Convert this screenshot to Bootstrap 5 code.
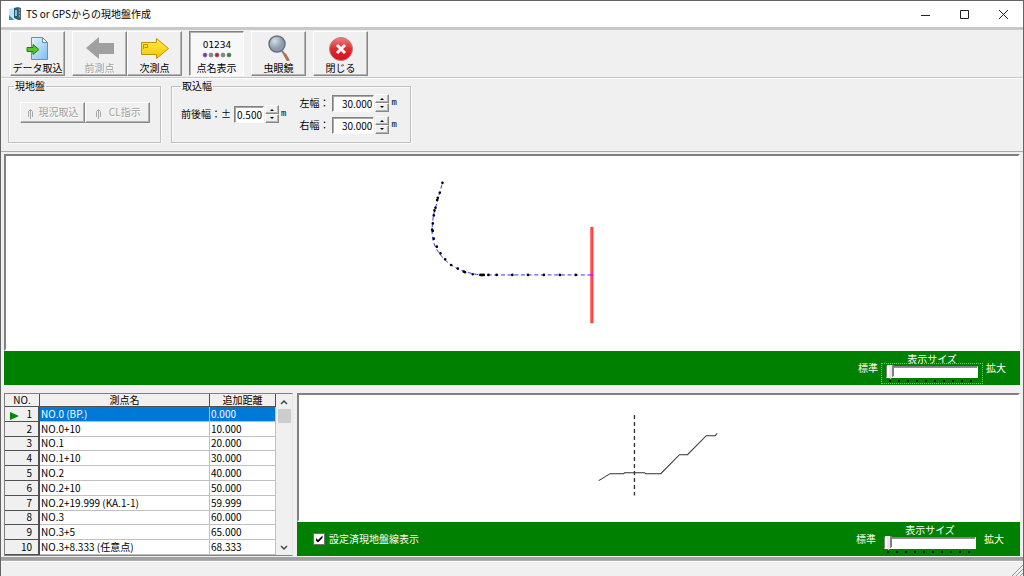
<!DOCTYPE html>
<html lang="ja">
<head>
<meta charset="utf-8">
<meta name="viewport" content="width=device-width, initial-scale=1">
<title>TS or GPSからの現地盤作成</title>
<link href="https://cdn.jsdelivr.net/npm/bootstrap@5.3.0/dist/css/bootstrap.min.css" rel="stylesheet">
<style>
  body { font: 10px/14px "Noto Sans CJK JP", sans-serif; color: #000; background: #f0f0f0; }
  .app-window { border: 1px solid #646464; border-bottom: 0; }
  .title-bar { height: 26px; background: #fff; }
  .title-bar h1 { font-size: 10px; line-height: 14px; font-weight: 400; }
  .win-btn { width: 39px; height: 25px; border: 0; background: none; padding: 0; }
  .tool-bar { padding: 1px 9px; border-top: 3px solid #c8c8c8; border-bottom: 1px solid #c8c8c8; gap: 7px; }
  .raised { background: #f0f0f0; border: 1px solid; border-color: #fff #888 #888 #fff; box-shadow: inset -1px -1px #b4b4b4; padding: 0; color: #000; white-space: nowrap; }
  .tool-btn { width: 55px; height: 45px; line-height: 14px; }
  .tool-btn svg { display: block; margin: 0 auto; }
  .tool-btn.pressed { background: #f8f8f8; border-color: #808080 #fff #fff #808080; box-shadow: inset 1px 1px #b4b4b4; }
  .raised:disabled { color: #a0a0a0; text-shadow: 1px 1px #fff; }
  .settings { padding: 0 8px 8px 7px; gap: 10px; border-top: 1px solid #fff; }
  .group-frame { border: 1px solid #c0c0c0; box-shadow: inset 1px 1px #fafafa, 1px 1px #fafafa; height: 64px; padding: 0 9px 5px; margin: 0; }
  .group-frame legend { float: none; width: auto; font-size: 10px; line-height: 14px; margin: 0 0 1px -4px; padding: 0 1px; }
  .cmd-btn { height: 21px; width: 65px; }
  .cmd-row { padding: 0 1px 0 2px; }
  .num-box { height: 17px; border: 1px solid; border-color: #808080 #fff #fff #808080; box-shadow: inset 1px 1px #a8a8a8; background: #fff; padding: 0 1px; text-align: right; line-height: 14px; border-radius: 0; margin-left: 3px; width: 42px; }
  .num-box.short { width: 30px; }
  .unit { font: 9px/14px "Liberation Mono", monospace; margin-left: 2px; }
  .side-widths { gap: 4px; margin-left: 13px; padding-right: 4px; }
  .spin { width: 14px; margin-left: 1px; }
  .spin button { height: 9px; width: 14px; display: block; }
  .spin svg { display: block; margin: 0 auto; }
  .sunken { border: 2px solid; border-color: #808080 #fff #fff #808080; background: #fff; }
  .sunken svg { flex: 1 1 0; min-height: 0; width: 100%; }
  .edge-top { border-top: 1px solid #aaa; padding: 2px 3px 0; }
  .green-bar { background: #008000; color: #fff; height: 34px; }
  .zoom-set { gap: 3px; margin-right: 14px; }
  .slider-box { width: 102px; height: 21px; padding: 1px 4px; border: 1px dotted transparent; }
  .slider-box.focused { border-color: #b0a0b0; }
  .slider-title { margin-bottom: -2px; line-height: 13px; }
  .track { appearance: none; -webkit-appearance: none; display: block; width: 100%; height: 18px; margin: 0; background: repeating-linear-gradient(90deg, #000 0 2px, transparent 2px 9px) 3px 15px / 88px 2px no-repeat; }
  .track::-webkit-slider-runnable-track { height: 12px; margin-bottom: 4px; background: #fff; border: 1px solid; border-color: #808080 #fff #fff #808080; box-shadow: inset 0 1px #909090; }
  .track::-webkit-slider-thumb { -webkit-appearance: none; width: 7px; height: 14px; margin-top: -2px; background: linear-gradient(90deg, #fff 0 2px, #e8e8e8 2px 5px, #808080 5px); clip-path: polygon(0 0, 100% 0, 100% 75%, 50% 100%, 0 75%); }
  .lower { flex: 0 0 171px; padding: 5px 3px 0; border-top: 3px solid #f0f0f0; gap: 4px; }
  .grid-pane { width: 289px; border: 1px solid; border-color: #808080 #e4e4e4 #808080 #808080; }
  .grid-table { height: 100%; table-layout: fixed; border-collapse: separate; border-spacing: 0; background: #fff; line-height: 12px; }
  .grid-table th, .grid-table td { padding: 0 1px; border: 0 solid #c0c0c0; border-width: 0 1px 1px 0; white-space: nowrap; vertical-align: middle; }
  .grid-table th { background: #f0f0f0; font-weight: 400; text-align: center; border-color: #505050; }
  .grid-table tbody th { text-align: right; padding-right: 6px; border-right-width: 2px; }
  .grid-table .current td { background: #0078d7; color: #fff; }
  .scroller { width: 16px; background: #f0f0f0; }
  .scroller button { width: 16px; height: 15px; border: 0; padding: 0; background: none; }
  .scroller svg { display: block; margin: auto; }
  .scroll-thumb { width: 13px; height: 14px; background: #cdcdcd; }
  .opt-check { width: 12px; height: 12px; margin: 0; appearance: none; background: #fff; border: 1px solid #707070; }
  .opt-check:checked { background: #fff url("data:image/svg+xml,%3Csvg xmlns='http://www.w3.org/2000/svg' viewBox='0 0 10 10'%3E%3Cpath d='M2 4v2.5L4 8.500l4.500-4.500V1.500L4 6z'/%3E%3C/svg%3E") center / 10px no-repeat; }
  .status { height: 16px; border-top: 1px solid #b0b0b0; box-shadow: 0 -3px #a0a0a0, inset 0 1px #fff; margin-top: 4px; }
</style>
</head>
<body>
<div class="app-window d-flex flex-column min-vh-100">
  <header class="title-bar d-flex align-items-center ps-2">
    <svg width="13" height="14" viewBox="0 0 13 14" aria-hidden="true"><path d="M0 2l5-1v12H0z" fill="#bfe6ee"/><path d="M0 8l5 5H0z" fill="#12a3a0"/><path d="M5 1l4-1v13l-4-2z" fill="#1d5f80"/><path d="M9 0l3 1v12H9z" fill="#53616b"/><path d="M6 3h2v6H6z" fill="#7cc6df"/><path d="M10 3h1M10 6h1M10 9h1" stroke="#ddd"/></svg>
    <h1 class="m-0 ms-1 flex-grow-1">TS or GPSからの現地盤作成</h1>
    <button class="win-btn" aria-label="最小化"><svg width="10" height="10"><path d="M0 5.500h9" stroke="#222"/></svg></button>
    <button class="win-btn" aria-label="最大化"><svg width="10" height="10"><path d="M.5.500h8v8h-8z" fill="none" stroke="#222"/></svg></button>
    <button class="win-btn" aria-label="閉じる"><svg width="10" height="10"><path d="M0 0l9 9M9 0l-9 9" stroke="#222"/></svg></button>
  </header>

  <nav class="tool-bar d-flex" aria-label="ツールバー">
    <button class="raised tool-btn"><svg width="30" height="28" viewBox="0 0 30 28"><defs><linearGradient id="pg" x2="1" y2="1"><stop stop-color="#e9f6ff"/><stop offset="1" stop-color="#7dbdf0"/></linearGradient></defs><path d="M8.500 4.500h11l5 5v17h-16z" fill="url(#pg)" stroke="#5b93c4"/><path d="M19.500 4.500v5h5z" fill="#fff" stroke="#5b93c4"/><path d="M4 14.500h6v-3l6 5-6 5v-3H4z" fill="#56c42c" stroke="#267c10"/></svg>データ取込</button>
    <div class="d-flex">
      <button class="raised tool-btn" disabled><svg width="30" height="28" viewBox="0 0 30 28"><path d="M1 15L14 4v6h15v11H14v5z" fill="#a0a0a0"/></svg>前測点</button>
      <button class="raised tool-btn"><svg width="30" height="28" viewBox="0 0 30 28"><defs><linearGradient id="yl" y2="1" x2="0"><stop stop-color="#fff04a"/><stop offset="1" stop-color="#f4c400"/></linearGradient></defs><path d="M1.500 9.500h15v-4l12 10-12 10v-4h-15z" fill="url(#yl)" stroke="#c09000"/><path d="M3.500 16v-4.500h4v3h-3" fill="none" stroke="#c09000"/></svg>次測点</button>
    </div>
    <button class="raised tool-btn pressed"><svg width="32" height="28" viewBox="0 0 32 28"><text x="16" y="15" text-anchor="middle" font-family="DejaVu Sans" font-size="9">01234</text><g stroke="#666" stroke-width=".5"><circle cx="4" cy="22" r="2" fill="#8030d0"/><circle cx="10" cy="22" r="2" fill="#888"/><circle cx="16" cy="22" r="2" fill="#d01828"/><circle cx="22" cy="22" r="2" fill="#888"/><circle cx="28" cy="22" r="2" fill="#209020"/></g></svg>点名表示</button>
    <button class="raised tool-btn"><svg width="30" height="28" viewBox="0 0 30 28"><defs><radialGradient id="ln" cx=".35" cy=".3"><stop stop-color="#d4dde6"/><stop offset="1" stop-color="#8c9cab"/></radialGradient></defs><path d="M18 18l3 4" stroke="#777" stroke-width="2"/><path d="M20.500 21l4 7" stroke="#b86f48" stroke-width="3"/><circle cx="13" cy="11" r="8" fill="url(#ln)" stroke="#65727c" stroke-width="1.500"/></svg>虫眼鏡</button>
    <button class="raised tool-btn"><svg width="30" height="28" viewBox="0 0 30 28"><defs><linearGradient id="rd" y2="1" x2="0"><stop stop-color="#f08080"/><stop offset=".5" stop-color="#df2b30"/><stop offset="1" stop-color="#d80e18"/></linearGradient></defs><circle cx="15" cy="16" r="11.500" fill="url(#rd)" stroke="#a88"/><path d="M11 12l8 8M19 12l-8 8" stroke="#fff" stroke-width="3"/></svg>閉じる</button>
  </nav>

  <section class="settings d-flex">
    <fieldset class="group-frame">
      <legend>現地盤</legend>
      <div class="cmd-row d-flex mt-2">
        <button class="raised cmd-btn" disabled><svg width="10" height="12" viewBox="0 0 10 12"><path d="M2.500 9V3.500l2-2 2 2V9M4.500 2v9" fill="none" stroke="#a8a8a8"/></svg> 現況取込</button>
        <button class="raised cmd-btn" disabled><svg width="10" height="12" viewBox="0 0 10 12"><path d="M2.500 9V3.500l2-2 2 2V9M4.500 2v9" fill="none" stroke="#a8a8a8"/></svg>&nbsp; CL指示</button>
      </div>
    </fieldset>
    <fieldset class="group-frame">
      <legend class="ms-0">取込幅</legend>
      <div class="d-flex align-items-center">
        <label for="fb">前後幅：±</label>
        <input id="fb" class="num-box short" value="0.500">
        <div class="spin"><button class="raised" aria-label="増やす"><svg width="4" height="3"><path d="M0 3l2-2 2 2z"/></svg></button><button class="raised" aria-label="減らす"><svg width="4" height="3"><path d="M0 0l2 2 2-2z"/></svg></button></div>
        <span class="unit">m</span>
        <div class="side-widths d-flex flex-column">
          <div class="d-flex align-items-center"><label for="lw">左幅：</label><input id="lw" class="num-box" value="30.000"><div class="spin"><button class="raised" aria-label="増やす"><svg width="4" height="3"><path d="M0 3l2-2 2 2z"/></svg></button><button class="raised" aria-label="減らす"><svg width="4" height="3"><path d="M0 0l2 2 2-2z"/></svg></button></div><span class="unit">m</span></div>
          <div class="d-flex align-items-center"><label for="rw">右幅：</label><input id="rw" class="num-box" value="30.000"><div class="spin"><button class="raised" aria-label="増やす"><svg width="4" height="3"><path d="M0 3l2-2 2 2z"/></svg></button><button class="raised" aria-label="減らす"><svg width="4" height="3"><path d="M0 0l2 2 2-2z"/></svg></button></div><span class="unit">m</span></div>
        </div>
      </div>
    </fieldset>
  </section>

  <main class="d-flex flex-column flex-grow-1">
    <section class="edge-top d-flex flex-column flex-grow-1">
      <div class="sunken d-flex flex-column flex-grow-1">
        <svg viewBox="0 0 1014 193" role="img" aria-label="平面線形">
          <g transform="translate(395 -5) scale(.3333)">
            <path d="M576 228V517" stroke="#f33" stroke-width="9"/><path d="M576 231V514" stroke="#f77" stroke-width="2"/>
            <path d="M575 372H241Q190 366 153 342Q92 296 96 236Q97 196 106 170L127 95" fill="none" stroke="#33f" stroke-width="3" stroke-dasharray="12 8"/>
            <path d="M127 95h0M119 125h0M113 140h0M111 147h0M106 170h0M103 178h0M101 193h0M98 217h0M96 236h0M98 240h0M101 263h0M110 287h0M121 307h0M135 325h0M153 342h0M173 353h0M191 362h0M195 364h0M218 370h0M241 372h0M246 372h0M251 372h0M265 372h0M290 372h0M337 372h0M384 372h0M432 372h0M480 372h0M528 372h0" stroke="#000" stroke-width="8" stroke-linecap="round"/>
            <path d="M571 372h9" stroke="#f0f" stroke-width="6"/>
          </g>
        </svg>
      </div>
      <div class="green-bar d-flex justify-content-end">
        <div class="zoom-set d-flex align-items-center">
          <span>標準</span>
          <div class="d-flex flex-column align-items-center"><label class="slider-title" for="z1">表示サイズ</label><div class="slider-box focused"><input id="z1" class="track" type="range" min="0" max="10" value="0"></div></div>
          <span>拡大</span>
        </div>
      </div>
    </section>

    <section class="lower d-flex">
      <div class="grid-pane d-flex flex-shrink-0">
        <table class="grid-table flex-grow-1">
          <colgroup><col style="width:35px"><col><col style="width:66px"></colgroup>
          <thead><tr><th>NO.</th><th>測点名</th><th>追加距離</th></tr></thead>
          <tbody>
            <tr class="current"><th><svg class="float-start ms-1 mt-1" width="9" height="8"><path d="M0 0l9 4-9 4z" fill="#080"/></svg>1</th><td>NO.0 (BP.)</td><td>0.000</td></tr>
            <tr><th>2</th><td>NO.0+10</td><td>10.000</td></tr>
            <tr><th>3</th><td>NO.1</td><td>20.000</td></tr>
            <tr><th>4</th><td>NO.1+10</td><td>30.000</td></tr>
            <tr><th>5</th><td>NO.2</td><td>40.000</td></tr>
            <tr><th>6</th><td>NO.2+10</td><td>50.000</td></tr>
            <tr><th>7</th><td>NO.2+19.999 (KA.1-1)</td><td>59.999</td></tr>
            <tr><th>8</th><td>NO.3</td><td>60.000</td></tr>
            <tr><th>9</th><td>NO.3+5</td><td>65.000</td></tr>
            <tr><th>10</th><td>NO.3+8.333 (任意点)</td><td>68.333</td></tr>
          </tbody>
        </table>
        <div class="scroller d-flex flex-column align-items-center">
          <button aria-label="上へ"><svg width="8" height="6"><path d="M1 5l3-3 3 3" fill="none" stroke="#444" stroke-width="1.500"/></svg></button>
          <div class="scroll-thumb"></div>
          <button class="mt-auto" aria-label="下へ"><svg width="8" height="6"><path d="M1 1l3 3 3-3" fill="none" stroke="#444" stroke-width="1.500"/></svg></button>
        </div>
      </div>
      <div class="d-flex flex-column flex-grow-1">
        <div class="sunken d-flex flex-column flex-grow-1">
          <svg viewBox="0 0 718 123" role="img" aria-label="横断図">
            <g transform="translate(260 -6) scale(.3333)" fill="none" stroke="#333" stroke-width="3">
              <path d="M118 272L152 251H193L195 248H255L259 251H304L360 194H384L440 137H467L473 130"/>
              <path d="M225 75V316" stroke-width="4" stroke-dasharray="12 9"/>
            </g>
          </svg>
        </div>
        <div class="green-bar d-flex align-items-center justify-content-between ps-3">
          <div class="d-flex align-items-center gap-1"><input id="done" class="opt-check" type="checkbox" checked><label for="done">設定済現地盤線表示</label></div>
          <div class="zoom-set d-flex align-items-center me-3">
            <span>標準</span>
            <div class="d-flex flex-column align-items-center"><label class="slider-title" for="z2">表示サイズ</label><div class="slider-box"><input id="z2" class="track" type="range" min="0" max="10" value="0"></div></div>
            <span>拡大</span>
          </div>
        </div>
      </div>
    </section>
  </main>
  <footer class="status d-flex justify-content-end align-items-end"><svg width="11" height="11"><path d="M0 11L11 0M4 11l7-7M8 11l3-3" stroke="#999"/></svg></footer>
</div>
<script src="https://cdn.jsdelivr.net/npm/bootstrap@5.3.0/dist/js/bootstrap.bundle.min.js"></script>
</body>
</html>
